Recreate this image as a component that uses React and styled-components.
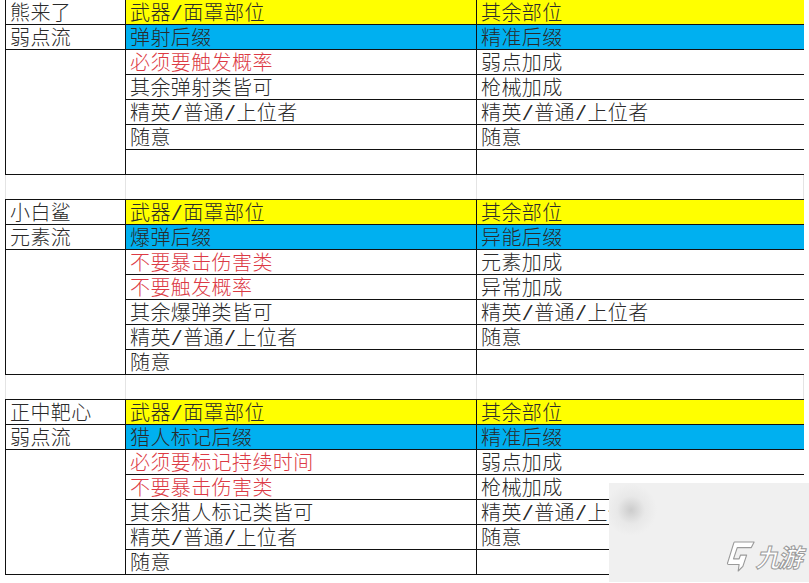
import React from 'react';
import styled, { createGlobalStyle } from 'styled-components';

const GlobalStyle = createGlobalStyle`
  html, body {
    margin: 0;
    padding: 0;
    background: #ffffff;
  }
  body {
    font-family: "Liberation Mono", "Noto Sans CJK SC", monospace;
    overflow: hidden;
  }
`;

const Sheet = styled.div`
  position: relative;
  width: 809px;
  height: 583px;
  overflow: hidden;
  padding-left: 5px;
  margin-top: -1px;
  box-sizing: border-box;
`;

const Table = styled.div`
  display: grid;
  grid-template-columns: 119px 350px 327px;
  grid-auto-rows: 24px;
  gap: 1px;
  width: 799px;
  box-sizing: border-box;
  border: 1px solid #111;
  background: #111;
`;

const Cell = styled.div`
  box-sizing: border-box;
  background: ${(p) => p.$bg || '#ffffff'};
  color: ${(p) => (p.$red ? '#dc3a45' : '#2a2a2a')};
  font-family: "Liberation Mono", "Noto Sans CJK SC", monospace;
  font-weight: 300;
  font-size: 20px;
  letter-spacing: 0.4px;
  line-height: 18px;
  padding: 6px 0 0 4px;
  white-space: nowrap;
  grid-row: ${(p) => p.$span || 'auto'};
`;

const Gap = styled.div`
  display: grid;
  grid-template-columns: 120px 351px 328px;
  height: 24px;
  width: 799px;
`;

const GapCol = styled.div`
  border-left: 1px solid #e4e4e4;
  &:last-child {
    border-right: 1px solid #e4e4e4;
  }
`;

const Watermark = styled.div`
  position: absolute;
  left: 609px;
  top: 484px;
  width: 200px;
  height: 100px;
  background:
    radial-gradient(circle at 22px 27px, rgba(200, 200, 200, 0.9) 0px, rgba(225, 225, 225, 0.5) 14px, rgba(240, 240, 240, 0) 26px),
    #f0f0f0;
  display: flex;
  align-items: flex-end;
  justify-content: flex-end;
  padding: 0 7px 13px 0;
  box-sizing: border-box;
  gap: 2px;
`;

const Brand = styled.span`
  display: inline-block;
  font-family: "Noto Sans CJK SC", sans-serif;
  font-size: 25px;
  font-weight: 700;
  line-height: 27px;
  color: #ffffff;
  -webkit-text-stroke: 1px #9a9a9a;
  letter-spacing: -3px;
  transform: skewX(-14deg);
`;

const sections = [
  {
    name: '熊来了',
    style: '弱点流',
    left: ['弹射后缀', { t: '必须要触发概率', red: true }, '其余弹射类皆可', '精英/普通/上位者', '随意', ''],
    right: ['精准后缀', '弱点加成', '枪械加成', '精英/普通/上位者', '随意', ''],
  },
  {
    name: '小白鲨',
    style: '元素流',
    left: ['爆弹后缀', { t: '不要暴击伤害类', red: true }, { t: '不要触发概率', red: true }, '其余爆弹类皆可', '精英/普通/上位者', '随意'],
    right: ['异能后缀', '元素加成', '异常加成', '精英/普通/上位者', '随意', ''],
  },
  {
    name: '正中靶心',
    style: '弱点流',
    left: ['猎人标记后缀', { t: '必须要标记持续时间', red: true }, { t: '不要暴击伤害类', red: true }, '其余猎人标记类皆可', '精英/普通/上位者', '随意'],
    right: ['精准后缀', '弱点加成', '枪械加成', '精英/普通/上位者', '随意', ''],
  },
];

const YELLOW = '#ffff00';
const BLUE = '#00b0f0';

function Section({ data }) {
  const rows = data.left.map((l, i) => {
    const item = typeof l === 'string' ? { t: l } : l;
    const bg = i === 0 ? BLUE : undefined;
    return (
      <React.Fragment key={i}>
        {i === 0 && <Cell>{data.style}</Cell>}
        {i === 1 && <Cell $span="3 / span 5" />}
        <Cell $bg={bg} $red={item.red}>{item.t}</Cell>
        <Cell $bg={bg}>{data.right[i]}</Cell>
      </React.Fragment>
    );
  });
  return (
    <Table>
      <Cell>{data.name}</Cell>
      <Cell $bg={YELLOW}>武器/面罩部位</Cell>
      <Cell $bg={YELLOW}>其余部位</Cell>
      {rows}
    </Table>
  );
}

function Logo() {
  return (
    <svg width="30" height="34" viewBox="0 0 32 34" style={{ marginBottom: '-3px' }}>
      <path
        d="M9 2 H30 L27 8 H12 L8 20 H14 L15.5 16 H22 L18 28 L13 33 L14 26 H3 Q1 26 1.8 24 L8 4 Q8.6 2 9 2 Z"
        fill="#ffffff"
        stroke="#9a9a9a"
        strokeWidth="1.2"
        strokeLinejoin="round"
      />
    </svg>
  );
}

export default function App() {
  return (
    <>
      <GlobalStyle />
      <Sheet>
        {sections.map((s, i) => (
          <React.Fragment key={i}>
            {i > 0 && (
              <Gap>
                <GapCol />
                <GapCol />
                <GapCol />
              </Gap>
            )}
            <Section data={s} />
          </React.Fragment>
        ))}
        <Watermark>
          <Logo />
          <Brand>九游</Brand>
        </Watermark>
      </Sheet>
    </>
  );
}
